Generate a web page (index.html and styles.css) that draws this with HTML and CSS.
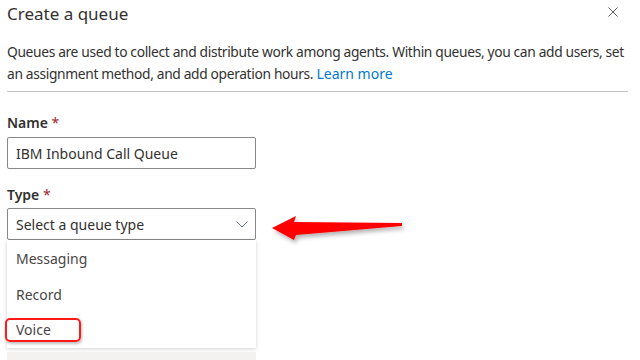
FILE: index.html
```html
<!DOCTYPE html>
<html lang="en">
<head>
    <meta charset="UTF-8">
    <meta name="viewport" content="width=device-width, initial-scale=1.0">
    <title>Create a queue</title>
    <link rel="stylesheet" href="styles.css">
</head>
<body>
    <div class="panel">
        <div class="header">
            <h1>Create a queue</h1>
            <button class="close" aria-label="Close">
                <svg width="10" height="10" viewBox="0 0 10 10">
                    <path d="M0.5 0.5L9.5 9.5M9.5 0.5L0.5 9.5" stroke="#605e5c" stroke-width="1" fill="none"/>
                </svg>
            </button>
        </div>
        <p class="intro"><span>Queues are used to collect and distribute work among agents. Within queues, you can add users, set an assignment method, and add operation hours.</span> <a href="#">Learn more</a></p>

        <div class="field field-name">
            <label>Name <span class="req">*</span></label>
            <div class="input">IBM Inbound Call Queue</div>
        </div>

        <div class="field field-type">
            <label>Type <span class="req">*</span></label>
            <div class="select">
                <span>Select a queue type</span>
                <svg width="12" height="7" viewBox="0 0 12 7">
                    <path d="M0.5 0.5L6 6L11.5 0.5" stroke="#5f6f8a" stroke-width="1" fill="none"/>
                </svg>
            </div>
            <ul class="options">
                <li>Messaging</li>
                <li>Record</li>
                <li><span class="mark">Voice</span></li>
            </ul>
            <div class="next"></div>
        </div>
    </div>

    <svg class="arrow" width="140" height="36" viewBox="270 212 140 36">
        <defs>
            <filter id="shadow" x="-20%" y="-50%" width="140%" height="200%">
                <feDropShadow dx="2" dy="3" stdDeviation="2" flood-color="#000" flood-opacity="0.3"/>
            </filter>
        </defs>
        <polygon points="272,228 296,216 294,222 402,223 402,226 296,235 294,240" fill="#ff0000" filter="url(#shadow)"/>
    </svg>
</body>
</html>
```

FILE: styles.css
```css
body {
    margin: 0;
    padding: 0 12px 0 7px;
    font-family: 'Noto Sans', 'Open Sans', sans-serif;
    color: #323130;
    background: #fff;
    position: relative;
    overflow: hidden;
    height: 360px;
}
.panel {
    width: 621px;
}
.header {
    display: flex;
    justify-content: space-between;
    align-items: center;
    height: 28px;
}
.header h1 {
    margin: 0;
    font-size: 17px;
    font-weight: 400;
    line-height: 28px;
}
.close {
    border: none;
    background: none;
    padding: 0;
    margin-right: 10px;
    margin-top: -5px;
    width: 10px;
    height: 10px;
    display: flex;
}
.intro {
    margin: 13px 0 0;
    padding-bottom: 6px;
    font-size: 13.8px;
    line-height: 22px;
    letter-spacing: -0.35px;
    border-bottom: 1px solid #c8c6c4;
}
.intro a {
    color: #0078d4;
    text-decoration: none;
    font-size: 14px;
    letter-spacing: 0;
}
.field {
    width: 249px;
}
.field label {
    display: block;
    font-size: 14px;
    font-weight: 600;
    line-height: 20px;
    margin-bottom: 4px;
}
.field-name {
    margin-top: 21px;
}
.field-type {
    margin-top: 16px;
}
.field-type label {
    margin-bottom: 3px;
}
.req {
    color: #a4262c;
    font-weight: 400;
}
.input, .select {
    box-sizing: border-box;
    height: 32px;
    border: 1px solid #8a8886;
    border-radius: 2px;
    padding: 0 8px;
    font-size: 14px;
    display: flex;
    align-items: center;
}
.select {
    justify-content: space-between;
    padding-right: 7px;
}
.options {
    list-style: none;
    margin: 0;
    padding: 0;
    background: #fff;
    box-shadow: 0 1px 4px rgba(0, 0, 0, 0.18);
}
.options li {
    height: 36px;
    display: flex;
    align-items: center;
    padding-left: 9px;
    font-size: 14px;
    color: #484644;
}
.mark {
    margin-left: -11px;
    padding: 0 28px 0 9px;
    height: 20px;
    line-height: 20px;
    border: 2px solid #ff1a1a;
    border-radius: 5px;
    box-shadow: 1px 2px 3px rgba(0, 0, 0, 0.25);
}
.next {
    margin-top: 4px;
    height: 12px;
    background: #f3f2f1;
}
.arrow {
    position: absolute;
    left: 270px;
    top: 212px;
}
```
